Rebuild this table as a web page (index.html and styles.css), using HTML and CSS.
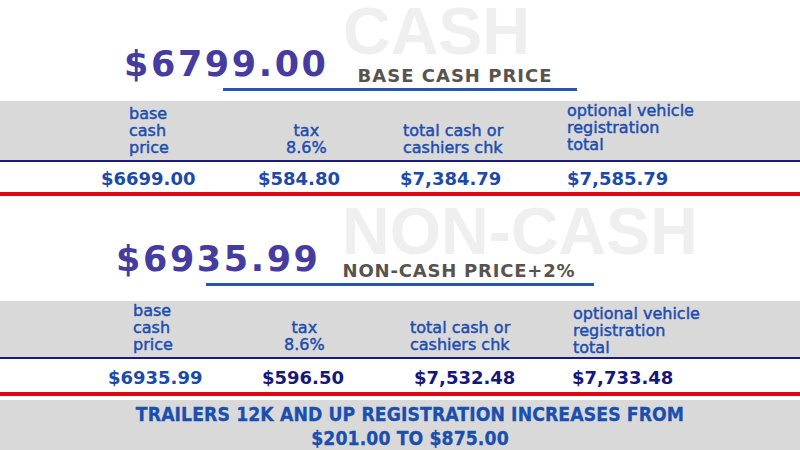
FILE: index.html
```html
<!DOCTYPE html>
<html>
<head>
<meta charset="utf-8">
<link rel="stylesheet" href="styles.css">
</head>
<body>
<div class="page">
  <section class="block s1">
    <div class="hero">
      <div class="watermark">CASH</div>
      <div class="headline">
        <span class="price">$6799.00</span>
        <span class="subtitle">BASE CASH PRICE</span>
      </div>
      <div class="rule"></div>
    </div>
    <div class="labels">
      <div class="lbl c1">base<br>cash<br>price</div>
      <div class="lbl c2">tax<br>8.6%</div>
      <div class="lbl c3">total cash or<br>cashiers chk</div>
      <div class="lbl c4">optional vehicle<br>registration<br>total</div>
    </div>
    <div class="values">
      <div class="val">$6699.00</div>
      <div class="val">$584.80</div>
      <div class="val">$7,384.79</div>
      <div class="val">$7,585.79</div>
    </div>
  </section>
  <section class="block s2">
    <div class="hero">
      <div class="watermark">NON-CASH</div>
      <div class="headline">
        <span class="price">$6935.99</span>
        <span class="subtitle">NON-CASH PRICE+2%</span>
      </div>
      <div class="rule"></div>
    </div>
    <div class="labels">
      <div class="lbl c1">base<br>cash<br>price</div>
      <div class="lbl c2">tax<br>8.6%</div>
      <div class="lbl c3">total cash or<br>cashiers chk</div>
      <div class="lbl c4">optional vehicle<br>registration<br>total</div>
    </div>
    <div class="values">
      <div class="val blue">$6935.99</div>
      <div class="val">$596.50</div>
      <div class="val">$7,532.48</div>
      <div class="val">$7,733.48</div>
    </div>
  </section>
  <footer class="notice">
    <p>TRAILERS 12K AND UP REGISTRATION INCREASES FROM<br>$201.00 TO $875.00</p>
  </footer>
</div>
</body>
</html>
```
FILE: styles.css
```css
html, body {
  margin: 0;
  padding: 0;
  background: #ffffff;
}
.page {
  width: 800px;
  height: 450px;
  overflow: hidden;
  font-family: "DejaVu Sans", "Liberation Sans", sans-serif;
}
.block {
  display: flex;
  flex-direction: column;
  border-bottom: 4px solid #e10612;
}
.hero {
  position: relative;
  display: flex;
  flex-direction: column;
  box-sizing: border-box;
}
.watermark {
  position: absolute;
  font-family: "Liberation Sans", Arial, sans-serif;
  font-weight: 700;
  font-size: 66px;
  line-height: 1;
  color: #efefef;
  white-space: nowrap;
}
.headline {
  position: relative;
  display: flex;
  align-items: flex-end;
}
.price {
  font-weight: 700;
  font-size: 35px;
  line-height: 35px;
  letter-spacing: 2.6px;
  color: #463c9f;
}
.subtitle {
  font-weight: 700;
  font-size: 18px;
  line-height: 18px;
  letter-spacing: 1px;
  color: #58534d;
  margin-bottom: -3px;
}
.rule {
  height: 3px;
  background: #2556b2;
  margin-top: 6px;
}
.labels {
  display: grid;
  align-items: end;
  background: #d9d9d9;
  border-bottom: 2px solid #1a1a82;
  box-sizing: border-box;
  padding-bottom: 4px;
}
.lbl {
  font-size: 16px;
  line-height: 17px;
  color: #1d4db0;
  -webkit-text-stroke: 0.45px #1d4db0;
  white-space: nowrap;
}
.c2 {
  justify-self: start;
  text-align: center;
}
.values {
  display: grid;
  box-sizing: border-box;
}
.val {
  font-weight: 700;
  font-size: 18px;
  line-height: 27px;
  color: #17177b;
  white-space: nowrap;
}
.s1 .val, .val.blue {
  color: #1c4aa8;
}

/* section 1 */
.s1 .hero { height: 101px; padding-top: 47px; }
.s1 .watermark { left: 343px; top: -2px; }
.s1 .headline { margin-left: 124px; gap: 29px; }
.s1 .rule { margin-left: 223px; width: 354px; }
.s1 .labels {
  height: 61px;
  padding-left: 129px;
  grid-template-columns: 157px 117px 164px 1fr;
}
.s1 .c4 { margin-bottom: 3px; }
.s1 .values {
  height: 30px;
  padding-top: 3px;
  padding-left: 101px;
  grid-template-columns: 157px 142px 167px 1fr;
}

/* section 2 */
.s2 .hero { height: 105px; padding-top: 46px; }
.s2 .watermark { left: 342px; top: 2px; }
.s2 .headline { margin-left: 116px; gap: 22px; }
.s2 .subtitle { letter-spacing: 0.8px; }
.s2 .rule { margin-left: 206px; width: 388px; }
.s2 .labels {
  height: 58px;
  padding-left: 133px;
  grid-template-columns: 151px 126px 163px 1fr;
}
.s2 .c4 { margin-bottom: -3px; }
.s2 .values {
  height: 33px;
  padding-top: 5px;
  padding-left: 108px;
  grid-template-columns: 154px 152px 158px 1fr;
}

.notice {
  margin-top: 4px;
  height: 50px;
  background: #d9d9d9;
  display: flex;
  justify-content: center;
  padding-left: 20px;
}
.notice p {
  margin: 0;
  padding-top: 3px;
  font-family: "DejaVu Sans Condensed", "DejaVu Sans", "Liberation Sans Narrow", sans-serif;
  font-stretch: condensed;
  font-weight: 700;
  font-size: 19.2px;
  line-height: 24px;
  letter-spacing: 0.1px;
  text-align: center;
  color: #1b4fae;
  -webkit-text-stroke: 0.3px #1b4fae;
}
```
